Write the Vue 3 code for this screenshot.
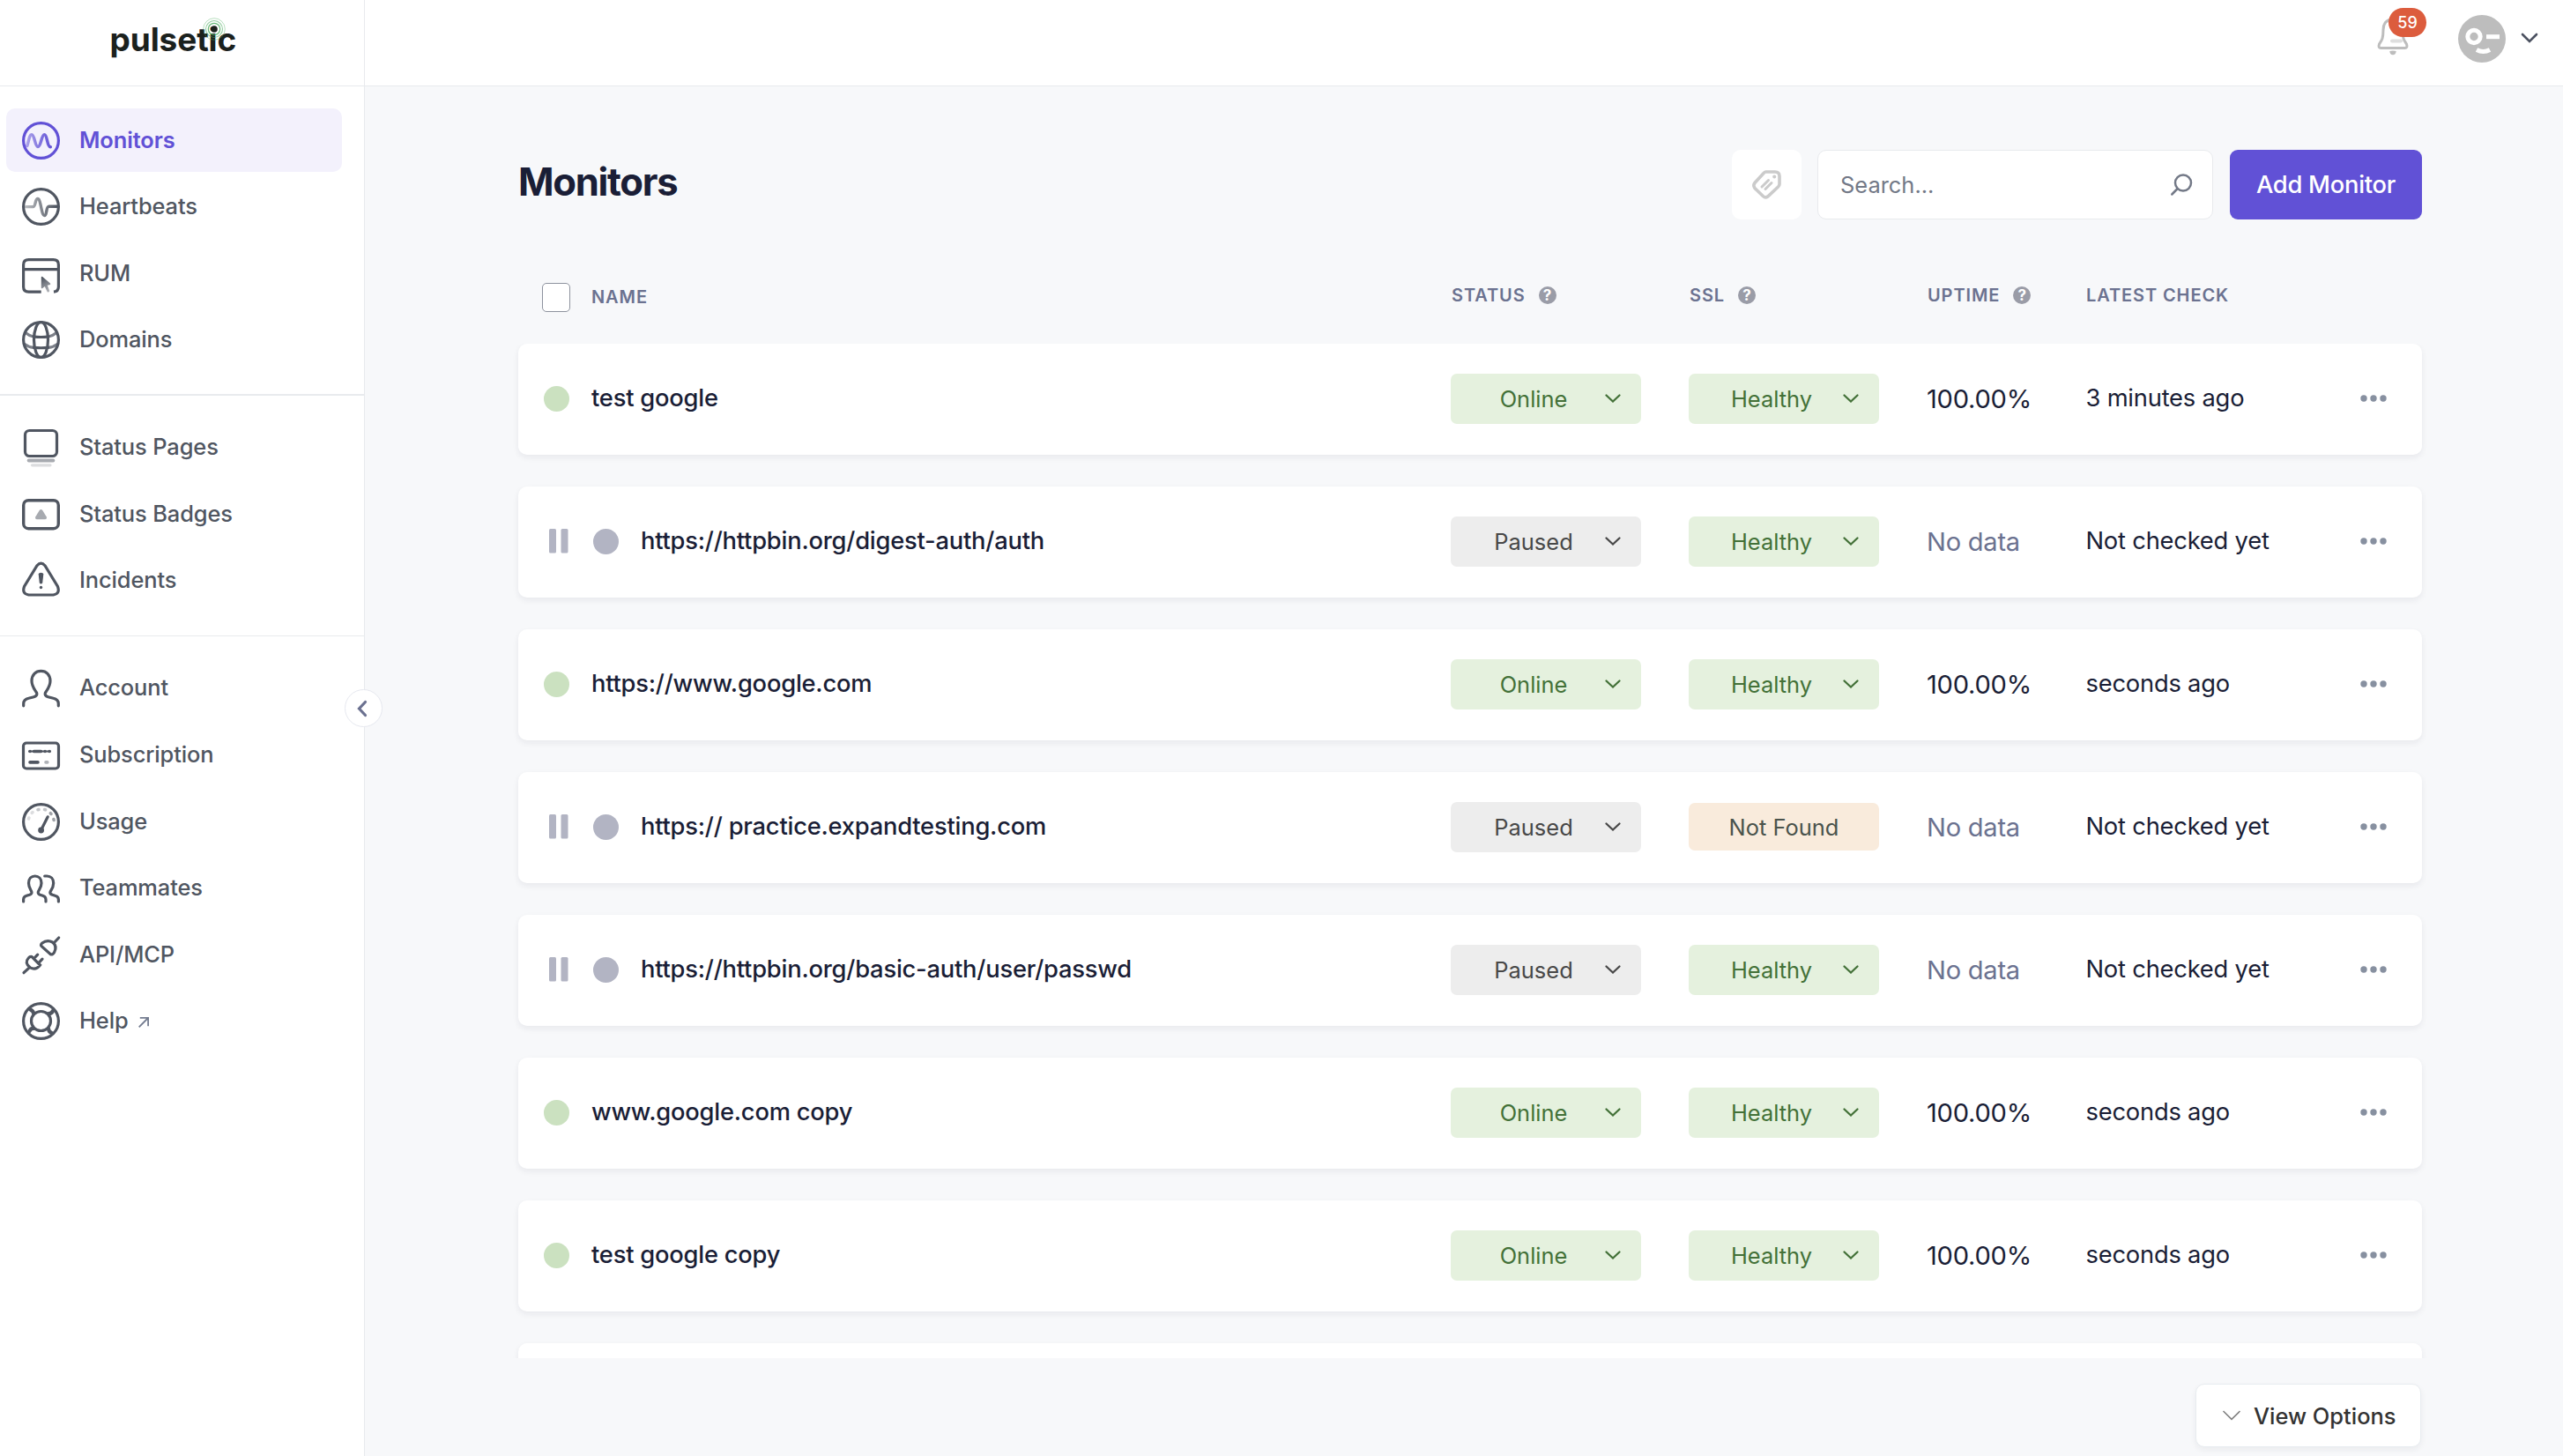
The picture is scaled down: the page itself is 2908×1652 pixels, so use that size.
<script setup>
import { ref } from 'vue'

const search = ref('')

const navGroups = [
  [
    {
      label: 'Monitors',
      active: true,
      icon: '<defs><linearGradient id="mon" x1="5" y1="0" x2="34" y2="0" gradientUnits="userSpaceOnUse"><stop stop-color="#6151d6" stop-opacity=".5"/><stop offset="1" stop-color="#6151d6"/></linearGradient></defs><circle cx="21.5" cy="21.5" r="19.900"/><path stroke="url(#mon)" stroke-width="3.500" d="M5.8 27.500C7.8 21.500 8.300 14.700 10.900 14.700C14.200 14.700 14.700 28.600 18 28.600C21.500 28.600 22 14.700 25.300 14.700C29 14.700 28 28.500 32.300 28.700"/>'
    },
    {
      label: 'Heartbeats',
      icon: '<defs><linearGradient id="hb" x1="4" y1="0" x2="39" y2="0" gradientUnits="userSpaceOnUse"><stop stop-color="#505661" stop-opacity=".4"/><stop offset="1" stop-color="#505661"/></linearGradient></defs><circle cx="21.5" cy="21.500" r="19.900"/><path stroke="url(#hb)" stroke-width="3.400" d="M4.500 21.600H12.500C15.700 21.600 14.500 12.500 17.800 12.500C21.500 12.500 21.700 31.500 25.400 31.500C28.700 31.500 26.800 21.300 30.500 21.300H39.500"/>'
    },
    {
      label: 'RUM',
      icon: '<defs><linearGradient id="cur" x1="23" y1="26" x2="31" y2="43" gradientUnits="userSpaceOnUse"><stop stop-color="#505661"/><stop offset="1" stop-color="#505661" stop-opacity=".4"/></linearGradient></defs><path stroke-linecap="butt" d="M21.700 42.200H7.500Q1.600 42.200 1.600 36.500V11.500Q1.600 5.700 7.500 5.700H35.500Q41.400 5.700 41.400 11.500V36.500Q41.400 41.500 36 42.200M1.600 16.700H41.400"/><path fill="url(#cur)" stroke="none" d="M21.800 25.500Q22 24.300 23.200 25L32 32.500Q33 33.800 31.200 34.300L28.800 34.800L31.200 41Q31 43 28.800 42.400L25.800 36L23.300 38Q21.800 38.600 21.800 37.400Z"/>'
    },
    {
      label: 'Domains',
      icon: '<circle cx="21.5" cy="21.500" r="19.900"/><ellipse cx="21.500" cy="21.500" rx="8" ry="20"/><path d="M13 18Q21.500 19 30 18M13.500 30.300Q21.500 31.200 29.500 30.300"/><path opacity=".75" d="M5 14.300Q8.500 17.300 13 18M38 14.300Q34.500 17.300 30 18M3 26.500Q7 29.700 13 30.300M40 26.500Q36 29.700 30 30.300"/>'
    }
  ],
  [
    {
      label: 'Status Pages',
      icon: '<rect x="3.500" y="2.500" width="36" height="29" rx="5"/><path d="M7.700 36.400H35.300" stroke-width="4" opacity=".5"/><path d="M11.500 41.800H32" opacity=".2"/>'
    },
    {
      label: 'Status Badges',
      icon: '<rect x="1.700" y="5.700" width="39.600" height="32" rx="5.500" stroke-width="3.400"/><path fill="#505661" stroke="none" opacity=".5" d="M19.800 17Q21.500 15 23.200 17L27.800 24.500Q28.500 27 26 27.200H17Q14.500 27 15.200 24.500Z"/>'
    },
    {
      label: 'Incidents',
      icon: '<path d="M17 4.700Q21.500 -0.500 26 4.700L40.500 28.500Q43.500 36.500 35.500 38H7.500Q-0.500 36.500 2.500 28.500Z"/><path fill="#505661" stroke="none" d="M18.700 14.500Q18.800 12.700 21.500 12.700T24.300 14.500L23.200 24.500Q21.500 26.700 19.800 24.500Z"/><circle cx="21.500" cy="29.500" r="1.700" fill="#505661" stroke="none"/>'
    }
  ],
  [
    {
      label: 'Account',
      icon: '<path d="M1.700 41.800V39.500Q1.700 34.500 7.500 33.300L13.500 31.700Q17.800 30.500 16.500 26.800C14.500 23.500 11 20 11 13.500C11 6.500 15.500 2.300 21.500 2.300S32 6.500 32 13.500C32 20 28.500 23.500 26.500 26.800Q25.200 30.500 29.500 31.700L35.500 33.300Q41.300 34.500 41.300 39.500V41.800"/>'
    },
    {
      label: 'Subscription',
      icon: '<rect x="1.500" y="8" width="40" height="29" rx="3.500"/><path stroke-width="3.600" d="M9 17.500H9.100M13.500 17.500H21.500M26 17.500H26.100M31 17.500H31.100M9 29.900H18"/><path d="M8 17.500H32" stroke-width="2"/><path d="M27 29.900H28.800" stroke-width="3.600" opacity=".45"/>'
    },
    {
      label: 'Usage',
      icon: '<circle cx="21.500" cy="21.500" r="19.900"/><path d="M22 30L29.200 15.800"/><circle cx="21.600" cy="31" r="3.400" fill="#505661" stroke="none"/><path opacity=".2" stroke-width="3.600" d="M7.500 18L7.900 17M11.200 11.300L12 10.700"/><path opacity=".35" stroke-width="3.600" d="M18 7.700L19 7.500M25.600 7.500L26.600 7.800"/><path opacity=".55" stroke-width="3.600" d="M32.300 11.700L33 12.400M35.900 18.500L36.100 19.500"/>'
    },
    {
      label: 'Teammates',
      icon: '<path d="M1.600 37V34.500Q1.600 31.200 5.200 30.200L8.500 29.300Q12 28 10.500 25C9.300 22.800 7.500 20.500 7.500 16C7.500 11 10.500 8 14.700 8S22 11 22 16C22 20.500 20 22.800 18.700 25Q17.300 28 20.500 29.300L23.500 30.200Q27 31.200 27 34.500V37M25.700 8H28.300C32.500 8 35.700 11 35.700 16C35.700 20.500 33.800 22.800 32.300 25.200Q30.800 28 34.500 29.300L37.500 30.200Q41.400 31.200 41.400 34.500V37"/>'
    },
    {
      label: 'API/MCP',
      icon: '<path d="M2 41.700L8.300 35.800M11.200 23.600L20.500 33Q15.800 39.300 9.200 35.800Q2.300 30.500 7.300 25Q9 23 11.200 23.600ZM14 25L17.700 21.200M19.500 29.800L23 26.200M22.200 11.700Q20.800 10.200 22.500 8.300Q28.500 3.500 34.500 7Q40.300 11.500 36.600 18.500Q34.700 22 32 20.500ZM36 8L41.700 2"/>'
    },
    {
      label: 'Help',
      external: true,
      icon: '<circle cx="21.500" cy="21.500" r="19.900"/><circle cx="21.500" cy="21.500" r="11"/><path stroke-width="4.200" d="M9.500 8.500Q13 10 13.200 13.200M35 10Q33.500 13.200 30 13.200M8.500 33Q10 29.500 13.200 30M33.500 35Q30 33.500 30 30"/>'
    }
  ]
]

const monitors = [
  { name: 'test google', status: 'Online', ssl: 'Healthy', uptime: '100.00%', latest: '3 minutes ago' },
  { name: 'https://httpbin.org/digest-auth/auth', status: 'Paused', ssl: 'Healthy', uptime: 'No data', latest: 'Not checked yet' },
  { name: 'https://www.google.com', status: 'Online', ssl: 'Healthy', uptime: '100.00%', latest: 'seconds ago' },
  { name: 'https:// practice.expandtesting.com', status: 'Paused', ssl: 'Not Found', uptime: 'No data', latest: 'Not checked yet' },
  { name: 'https://httpbin.org/basic-auth/user/passwd', status: 'Paused', ssl: 'Healthy', uptime: 'No data', latest: 'Not checked yet' },
  { name: 'www.google.com copy', status: 'Online', ssl: 'Healthy', uptime: '100.00%', latest: 'seconds ago' },
  { name: 'test google copy', status: 'Online', ssl: 'Healthy', uptime: '100.00%', latest: 'seconds ago' }
]

const columns = [
  { label: 'Status', help: true },
  { label: 'SSL', help: true },
  { label: 'Uptime', help: true },
  { label: 'Latest check', help: false }
]
</script>

<template>
  <div class="app">
    <aside class="sidebar">
      <div class="brand">
        <div class="logo">
          pulsetic
          <svg class="pulse" viewBox="0 0 28 28" fill="none" stroke="#4fae62">
            <circle cx="14" cy="14" r="12.300" stroke-width="1" opacity=".4" />
            <circle cx="14" cy="14" r="9.500" stroke-width="1.100" opacity=".6" />
            <circle cx="14" cy="14" r="6.700" stroke-width="1.200" opacity=".85" />
            <circle cx="14" cy="14" r="3.800" fill="#1b211d" stroke="none" />
          </svg>
        </div>
      </div>
      <nav>
        <ul v-for="(group, i) in navGroups" :key="i" class="nav-group">
          <li v-for="item in group" :key="item.label" :class="['nav-item', { active: item.active }]">
            <svg class="nav-icon" viewBox="0 0 43 43" v-html="item.icon"></svg>
            <span class="nav-label">{{ item.label }}</span>
            <svg v-if="item.external" class="external" viewBox="0 0 12 12">
              <path d="M0.700 11.300L11 1M1.800 0.900H11.100V10.200" />
            </svg>
          </li>
        </ul>
      </nav>
      <button class="collapse">
        <svg viewBox="0 0 12 20"><path d="M9.500 2.500L2.500 10L9.500 17.500" /></svg>
      </button>
    </aside>

    <div class="page">
      <header class="topbar">
        <div class="bell">
          <svg viewBox="0 0 36 42">
            <path d="M18 2C9.500 2 7 8 7 14C7 24 5.500 25.500 2.500 30Q1 34.500 4.500 34.500H31.500Q35 34.500 33.500 30C30.500 25.500 29 24 29 14C29 8 26.500 2 18 2Z" fill="none" stroke="#bdbdbd" stroke-width="3" />
            <path d="M17 26.500H27" stroke="#dedede" stroke-width="4" stroke-linecap="round" />
            <path d="M14.300 38Q18 37.200 21.700 38Q21.300 42.300 18 42.300T14.300 38Z" fill="#bdbdbd" />
          </svg>
          <span class="count">59</span>
        </div>
        <div class="user">
          <svg class="avatar" viewBox="0 0 54 54">
            <circle cx="27" cy="27" r="27" fill="#bdbdbd" />
            <circle cx="18" cy="24.500" r="7.200" fill="none" stroke="#fff" stroke-width="5" />
            <path d="M32 24.700H47" stroke="#fff" stroke-width="5" />
            <path d="M21 39.500Q28.500 43.500 36 39.500" fill="none" stroke="#fff" stroke-width="5" />
          </svg>
          <svg class="caret" viewBox="0 0 20 12"><path d="M2 2L10 10L18 2" /></svg>
        </div>
      </header>

      <main class="content">
        <div class="toolbar">
          <h1>Monitors</h1>
          <button class="tag-button">
            <svg viewBox="0 0 33 33" fill="none" stroke="#cbcbcb">
              <path d="M15.500 2H26Q31 2 31 7V16Q31 17.500 29.500 19L17.700 30Q15 32 12.300 29.500L3 20.500Q0.500 17.500 3 14.500L13 3.500Q14.500 2 15.500 2Z" stroke-width="3.600" />
              <path d="M11 19L18.500 11.500M15 21.500L22 14.500" stroke-width="3" stroke-linecap="round" />
              <circle cx="25.200" cy="7.500" r="2" fill="#cbcbcb" stroke="none" />
            </svg>
          </button>
          <div class="search">
            <input v-model="search" type="text" placeholder="Search..." />
            <svg viewBox="0 0 26 26"><circle cx="15" cy="10.500" r="9" /><path d="M8.700 17L2.300 23.500" /></svg>
          </div>
          <button class="add-button">Add Monitor</button>
        </div>

        <div class="table-head">
          <div class="head-name">
            <span class="checkbox"></span>
            <span class="head-label">Name</span>
          </div>
          <div v-for="col in columns" :key="col.label" class="head-cell">
            <span>{{ col.label }}</span>
            <span v-if="col.help" class="help">?</span>
          </div>
        </div>

        <div class="list">
          <div v-for="m in monitors" :key="m.name" class="row">
            <div class="name-cell">
              <svg v-if="m.status === 'Paused'" class="pause" viewBox="0 0 22 28">
                <rect x="0" y="0" width="8" height="27.500" rx="1.500" />
                <rect x="13.500" y="0" width="8" height="27.500" rx="1.500" />
              </svg>
              <span :class="['dot', m.status.toLowerCase()]"></span>
              <span class="name">{{ m.name }}</span>
            </div>
            <div>
              <div :class="['pill', m.status.toLowerCase()]">
                <span>{{ m.status }}</span>
                <svg viewBox="0 0 18 10"><path d="M1.500 1.500L9 8.500L16.500 1.500" /></svg>
              </div>
            </div>
            <div>
              <div v-if="m.ssl === 'Healthy'" class="pill healthy">
                <span>{{ m.ssl }}</span>
                <svg viewBox="0 0 18 10"><path d="M1.500 1.500L9 8.500L16.500 1.500" /></svg>
              </div>
              <div v-else class="pill missing">{{ m.ssl }}</div>
            </div>
            <div :class="['uptime', { muted: m.uptime === 'No data' }]">{{ m.uptime }}</div>
            <div class="latest">{{ m.latest }}</div>
            <svg class="more" viewBox="0 0 30 8">
              <circle cx="4" cy="4" r="3.700" />
              <circle cx="15" cy="4" r="3.700" />
              <circle cx="26" cy="4" r="3.700" />
            </svg>
          </div>
          <div class="row"></div>
        </div>

        <div class="footer">
          <button class="view-options">
            <svg viewBox="0 0 20 12"><path d="M0.500 1L10 10.300L19.500 1" /></svg>
            View Options
          </button>
        </div>
      </main>
    </div>
  </div>
</template>

<style>
body {
  margin: 0;
  background: #f7f8fa;
}
</style>

<style scoped>
.app {
  display: flex;
  height: 1652px;
  overflow: hidden;
  background: #f7f8fa;
  font-family: Inter, "Liberation Sans", sans-serif;
  font-size: 25.450px;
  color: #1a1e36;
}

* {
  box-sizing: border-box;
}

button {
  font: inherit;
  border: none;
  padding: 0;
  cursor: pointer;
}

svg {
  flex: none;
  overflow: visible;
}

.sidebar {
  position: relative;
  flex: none;
  width: 414px;
  background: #fff;
  border-right: 1px solid #e8eaed;
}

.brand {
  display: flex;
  height: 98px;
  padding: 23px 0 0 124.500px;
  border-bottom: 1px solid #e8eaed;
}

.logo {
  position: relative;
  height: 46px;
  line-height: 44px;
  font-size: 37px;
  font-weight: 700;
  letter-spacing: -0.100px;
  color: #1b211d;
}

.pulse {
  position: absolute;
  left: 104px;
  top: -4.500px;
  width: 28px;
  height: 28px;
}

.nav-group {
  display: flex;
  flex-direction: column;
  gap: 3.600px;
  margin: 0;
  padding: 23px 25px 26px 7px;
  list-style: none;
  border-bottom: 1px solid #e8eaed;
}

.nav-group:first-child {
  padding-top: 25px;
  padding-bottom: 25px;
  border-bottom: 2px solid #e8ebee;
}

.nav-group:last-child {
  border-bottom: none;
}

.nav-item {
  display: flex;
  align-items: center;
  height: 72px;
  padding-left: 18px;
  border-radius: 10px;
  font-weight: 500;
  letter-spacing: -0.120px;
  color: #505661;
}

.nav-item.active {
  background: #f3f1fc;
  font-weight: 600;
  color: #6151d6;
}

.nav-icon {
  width: 43px;
  height: 43px;
  fill: none;
  stroke: currentColor;
  stroke-width: 3.200;
  stroke-linecap: round;
}

.nav-label {
  margin-left: 22px;
  padding-bottom: 2px;
}

.external {
  width: 12px;
  height: 12px;
  margin: 2px 0 0 11px;
  fill: none;
  stroke: #747c90;
  stroke-width: 1.800;
}

.collapse {
  position: absolute;
  left: 391px;
  top: 782px;
  display: flex;
  align-items: center;
  justify-content: center;
  width: 43px;
  height: 43px;
  background: #fff;
  border: 1.500px solid #e6e8ef;
  border-radius: 50%;
}

.collapse svg {
  width: 12px;
  height: 20px;
  margin-right: 4px;
  fill: none;
  stroke: #6b7190;
  stroke-width: 3.200;
  stroke-linecap: round;
}

.page {
  flex: 1;
  min-width: 0;
}

.topbar {
  display: flex;
  justify-content: flex-end;
  height: 98px;
  padding-right: 28px;
  background: #fff;
  border-bottom: 1px solid #e8eaed;
}

.bell {
  position: relative;
  width: 36px;
  margin-right: 56px;
  padding-top: 20px;
}

.bell svg {
  width: 36px;
  height: 42px;
}

.count {
  position: absolute;
  left: 13px;
  top: 9px;
  width: 43px;
  height: 33px;
  line-height: 34px;
  border-radius: 17px;
  background: #dc5c3d;
  color: #fff;
  font-size: 18px;
  font-weight: 500;
  text-align: center;
}

.user {
  display: flex;
  padding-top: 17px;
}

.avatar {
  width: 54px;
  height: 54px;
}

.caret {
  width: 20px;
  height: 12px;
  margin: 20px 0 0 17px;
  fill: none;
  stroke: #4c5261;
  stroke-width: 2.600;
  stroke-linecap: round;
}

.content {
  width: 2160px;
  margin-left: 174px;
  padding-top: 72px;
}

.toolbar {
  display: flex;
  height: 79px;
}

h1 {
  flex: 1;
  margin: 0;
  line-height: 73px;
  font-size: 43.600px;
  font-weight: 700;
  letter-spacing: -1.300px;
}

.tag-button {
  display: flex;
  align-items: center;
  justify-content: center;
  width: 79px;
  margin-right: 18px;
  background: #fff;
  border-radius: 10px;
}

.tag-button svg {
  width: 33px;
  height: 33px;
}

.search {
  display: flex;
  align-items: center;
  width: 449px;
  margin-right: 19px;
  padding: 0 22px 0 25px;
  background: #fff;
  border: 1px solid #e8eaed;
  border-radius: 10px;
}

.search input {
  flex: 1;
  min-width: 0;
  padding: 0 0 1px;
  border: none;
  outline: none;
  background: none;
  font: inherit;
  color: #1a1e36;
}

.search input::placeholder {
  color: #737987;
}

.search svg {
  width: 26px;
  height: 26px;
  fill: none;
  stroke: #737987;
  stroke-width: 2.500;
  stroke-linecap: round;
}

.add-button {
  width: 218px;
  background: #6151d6;
  border-radius: 9px;
  color: #fff;
  font-size: 27.300px;
  font-weight: 500;
  letter-spacing: -0.250px;
}

.table-head,
.row {
  display: grid;
  grid-template-columns: 1058px 270px 270px 180px 1fr;
}

.table-head {
  height: 141px;
  padding-top: 72px;
  font-size: 20px;
  font-weight: 600;
  letter-spacing: 0.900px;
  text-transform: uppercase;
  color: #6b7290;
}

.head-name {
  display: flex;
  align-items: center;
  gap: 24px;
  height: 33px;
  padding-left: 27px;
}

.head-label {
  padding-bottom: 2px;
}

.checkbox {
  width: 32px;
  height: 33px;
  background: #fff;
  border: 1px solid #8d929e;
  border-radius: 5px;
}

.head-cell {
  display: flex;
  align-items: center;
  gap: 15px;
  height: 27px;
  padding-left: 1px;
}

.help {
  width: 20px;
  height: 20px;
  border-radius: 50%;
  background: #9a9ca7;
  color: #fff;
  font-size: 17px;
  font-weight: 700;
  line-height: 21px;
  letter-spacing: 0;
  text-align: center;
}

/* extra side padding keeps the row shadows visible inside the clipped list */
.list {
  display: flex;
  flex-direction: column;
  gap: 36px;
  height: 1151px;
  margin: 0 -10px;
  padding: 0 10px;
  overflow: hidden;
}

.row {
  flex: none;
  grid-template-columns: 1058px 270px 270px 180px 311px 1fr;
  align-items: center;
  height: 126px;
  padding-bottom: 2px;
  background: #fff;
  border-radius: 10px;
  box-shadow: 0 3px 7px rgba(30, 35, 50, 0.070);
}

.name-cell {
  display: flex;
  align-items: center;
  padding-left: 29px;
}

.pause {
  width: 22px;
  height: 28px;
  margin: 0 28px 0 6px;
  fill: #b2b4c3;
}

.dot {
  width: 29px;
  height: 29px;
  border-radius: 50%;
}

.dot.online {
  background: #cbe1c0;
}

.dot.paused {
  background: #b2b4c3;
}

.name {
  margin-left: 25px;
  padding-bottom: 2px;
  font-size: 27.300px;
  font-weight: 500;
  letter-spacing: -0.210px;
}

.pill {
  display: flex;
  align-items: center;
  width: 216px;
  height: 57px;
  border-radius: 7px;
}

.pill span {
  width: 188px;
  text-align: center;
}

.pill svg {
  width: 18px;
  height: 10px;
  margin-left: -13px;
  fill: none;
  stroke: currentColor;
  stroke-width: 2.300;
  stroke-linecap: round;
}

.pill.online,
.pill.healthy {
  background: #e5f1de;
  color: #437138;
}

.pill.paused {
  background: #ededed;
  color: #484848;
}

.pill.missing {
  justify-content: center;
  height: 54px;
  background: #f9ebdc;
  color: #4a534c;
}

.uptime {
  font-size: 29.100px;
  letter-spacing: -0.250px;
}

.uptime.muted {
  color: #6b7290;
}

.latest {
  padding-bottom: 2px;
  padding-left: 0.500px;
  font-size: 27.300px;
  letter-spacing: -0.200px;
}

.more {
  width: 30px;
  height: 8px;
  margin-left: 0.500px;
  fill: #8790a0;
}

.footer {
  display: flex;
  justify-content: flex-end;
  padding: 29px 1px 0 0;
}

.view-options {
  display: flex;
  align-items: center;
  gap: 15px;
  width: 256px;
  height: 72px;
  padding-left: 30px;
  background: #fff;
  border: 1px solid #e8ecf0;
  border-radius: 10px;
  box-shadow: 0 3px 7px rgba(30, 35, 50, 0.060);
  color: #333;
  font-weight: 500;
  white-space: nowrap;
}

.view-options svg {
  width: 20px;
  height: 12px;
  fill: none;
  stroke: #808080;
  stroke-width: 1.600;
}
</style>
